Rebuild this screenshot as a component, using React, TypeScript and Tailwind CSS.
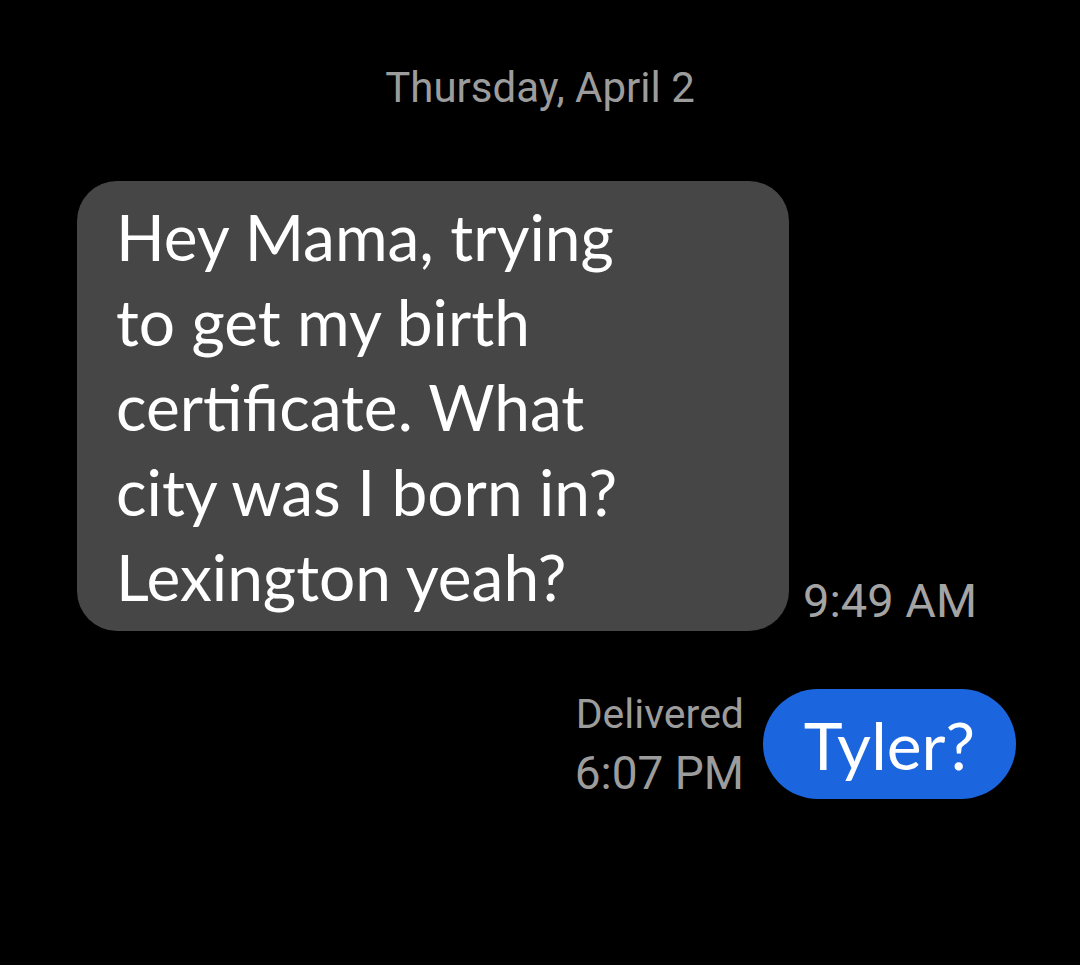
import React from "react";

export default function App() {
  const lines = [
    "Hey Mama, trying",
    "to get my birth",
    "certificate. What",
    "city was I born in?",
    "Lexington yeah?",
  ];
  return (
    <div className="w-[1080px] h-[965px] bg-black flex flex-col overflow-hidden font-['Roboto',sans-serif]">
      <div className="pt-[64px] text-center text-[42px] leading-[48px] text-[#9c9c9c]">
        Thursday, April 2
      </div>
      <div className="mt-[69px] flex items-end pl-[77px]">
        <div className="w-[712px] h-[450px] rounded-[40px] bg-[#464646] pl-[39px] pt-[13px] text-white text-[64px] leading-[85px] font-['Lato',sans-serif]">
          {lines.map((l) => (
            <div key={l} className="whitespace-nowrap">
              {l}
            </div>
          ))}
        </div>
        <div className="ml-[14px] mb-[6px] text-[47px] leading-[48px] text-[#a4a4a4] whitespace-nowrap">
          9:49 AM
        </div>
      </div>
      <div className="mt-[54px] flex items-center justify-end pr-[64px]">
        <div className="mr-[19px] flex flex-col items-end text-[#9c9c9c] leading-[59px]">
          <div className="text-[41px]">Delivered</div>
          <div className="text-[46px]">6:07 PM</div>
        </div>
        <div className="w-[253px] h-[110px] rounded-full bg-[#1b66de] flex items-center justify-center text-white text-[66px] font-['Lato',sans-serif]">
          Tyler?
        </div>
      </div>
    </div>
  );
}
